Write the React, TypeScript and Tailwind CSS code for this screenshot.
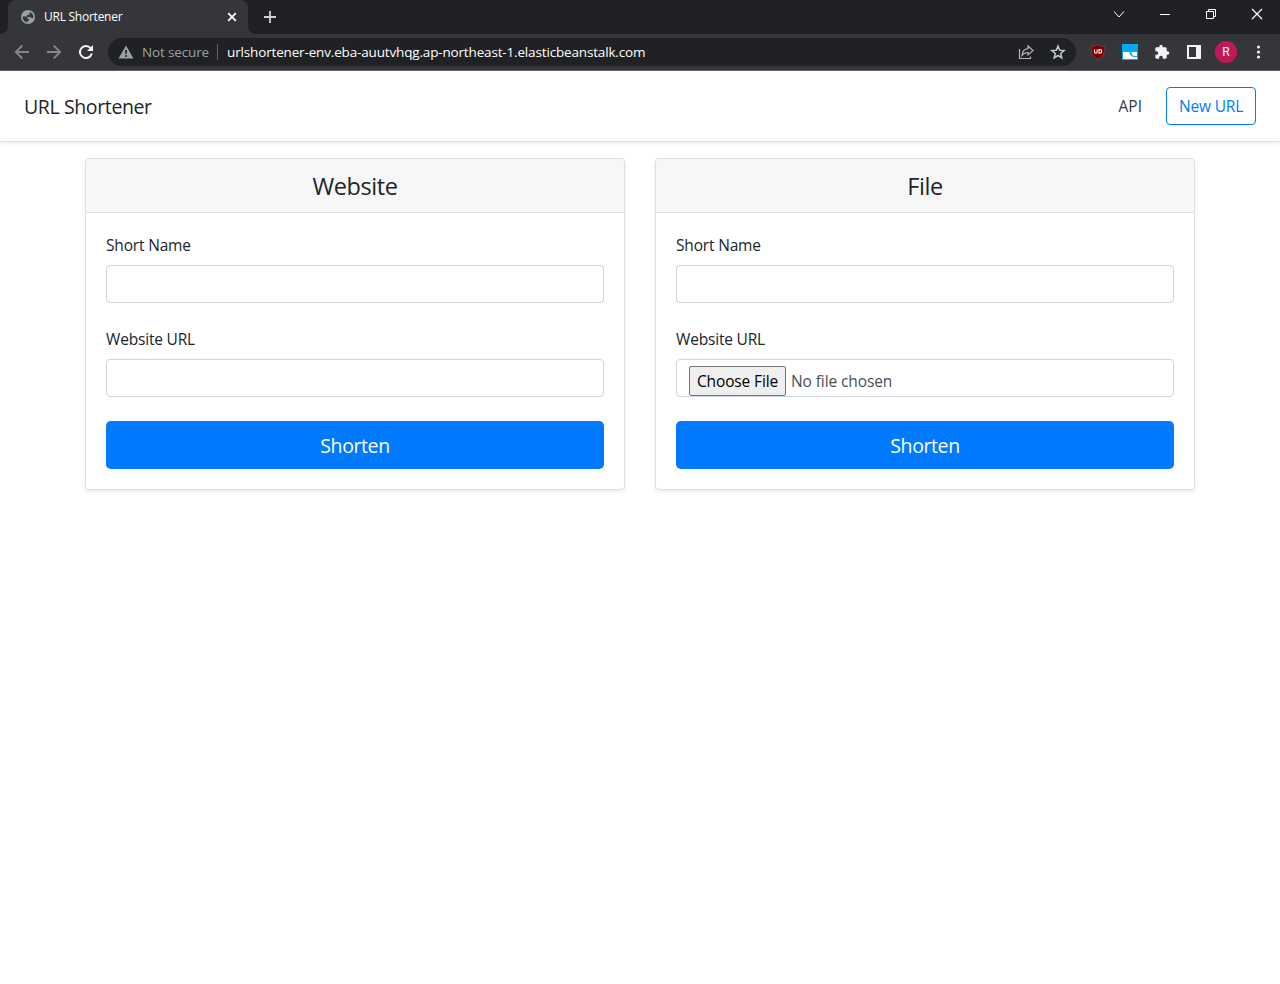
import type { ReactNode } from "react";

function TabStrip() {
  return (
    <div className="flex h-[34px] bg-[#202124] text-white">
      <div className="flex w-2 items-end bg-[#35363a]">
        <div className="h-full w-full rounded-br-[8px] bg-[#202124]" />
      </div>
      <div className="bg-[#202124]">
        <div className="flex h-[34px] w-60 items-center rounded-t-[8px] bg-[#35363a] pr-[10px] pl-[13px]">
          <svg className="size-[14px] shrink-0" viewBox="0 0 14 14">
            <circle cx="7" cy="7" r="7" fill="#9aa0a6" />
            <path d="M1.6 6.6h3.2c1 0 1.8.7 1.8 1.5v.8h1.5v1.5H6.7v1.9C4 12.5 1.5 10 1.6 6.6zM8.6 1.9c2.2.7 3.7 2.6 3.8 5-.3 1-.8 1.4-1.3 1.4-.6 0-.8-.9-1.4-1.1l-2.5-.1c-.8 0-1.4-.5-1.4-1.2 0-.8.6-1.2 1.4-1.2h.6c.8 0 .8-.7.8-1.3z" fill="#35363a" />
          </svg>
          <span className="ml-[9px] text-[12px] tracking-[-0.25px] whitespace-nowrap">URL Shortener</span>
          <svg className="ml-auto size-3" viewBox="0 0 12 12" stroke="#fff" strokeWidth="1.7">
            <path d="M2.2 2.2l7.6 7.6M9.8 2.2l-7.6 7.6" />
          </svg>
        </div>
      </div>
      <div className="w-2 bg-[#35363a]">
        <div className="h-full w-full rounded-bl-[8px] bg-[#202124]" />
      </div>
      <svg className="mt-[11px] ml-2 size-3" viewBox="0 0 12 12" stroke="#cfd1d4" strokeWidth="1.8">
        <path d="M0 6h12M6 0v12" />
      </svg>
      <div className="ml-auto flex pt-2">
        <svg className="h-3 w-[46px]" viewBox="0 0 46 12" fill="none" stroke="#fff">
          <path d="M18 3.5l5 5.5 5-5.5" />
        </svg>
        <svg className="h-3 w-[46px]" viewBox="0 0 46 12" stroke="#fff">
          <path d="M18 6.5h10" />
        </svg>
        <svg className="h-3 w-[46px]" viewBox="0 0 46 12" fill="none" stroke="#fff">
          <path d="M18.5 3.5h7v7h-7zM20.5 3.5v-2h7v7h-2" />
        </svg>
        <svg className="h-3 w-[46px]" viewBox="0 0 46 12" stroke="#fff" strokeWidth="1.2">
          <path d="M18 1l10 10M28 1L18 11" />
        </svg>
      </div>
    </div>
  );
}

function Toolbar() {
  return (
    <div className="flex h-[37px] items-center border-b border-[#5f6068] bg-[#35363a]">
      <svg className="ml-[14px] size-4" viewBox="0 0 16 16" fill="none" stroke="#85868a" strokeWidth="1.8">
        <path d="M15 8H2M8.3 1.5L1.8 8l6.5 6.5" />
      </svg>
      <svg className="ml-4 size-4" viewBox="0 0 16 16" fill="none" stroke="#85868a" strokeWidth="1.8">
        <path d="M1 8h13M7.7 1.5L14.2 8l-6.5 6.5" />
      </svg>
      <svg className="ml-4 size-4" viewBox="0 0 16 16" fill="none" stroke="#f1f3f4" strokeWidth="2">
        <path d="M13.8 9.5A6 6 0 1 1 12.6 4.2" />
        <path d="M15 1v6H9z" fill="#f1f3f4" stroke="none" />
      </svg>
      <div className="ml-[14px] flex h-7 w-[968px] items-center rounded-full bg-[#202124] px-[10px]">
        <svg className="h-[14px] w-4" viewBox="0 0 16 14">
          <path d="M8 .5L15.500 13.500H.5z" fill="#9aa0a6" />
          <path d="M8 5v3.800M8 10v2" stroke="#202124" strokeWidth="1.7" />
        </svg>
        <span className="ml-2 pt-px text-[13.5px] tracking-[-0.14px] whitespace-nowrap text-[#9aa0a6]">Not secure</span>
        <div className="ml-2 h-4 w-px bg-[#5f6368]" />
        <span className="ml-[9px] pt-px text-[13.5px] tracking-[-0.16px] whitespace-nowrap text-white">
          urlshortener-env.eba-auutvhqg.ap-northeast-1.elasticbeanstalk.com
        </span>
        <svg className="ml-auto size-4" viewBox="0 0 16 16" fill="none" stroke="#b5b7ba" strokeWidth="1.2">
          <path d="M1.5 5v9.500h11v-2" />
          <path d="M10 2l5 4.500-5 4.500V8.500C7.200 8.500 5.500 9.400 4 11.500 4.300 7.500 6.500 5 10 4.700z" />
        </svg>
        <svg className="ml-4 size-4" viewBox="0 0 16 16" fill="none" stroke="#c4c7c9" strokeWidth="1.5">
          <path d="M8 2l1.700 4.200 4.400.3-3.400 2.900 1.100 4.400L8 11.500l-3.800 2.300 1.100-4.400L1.900 6.500l4.400-.3z" />
        </svg>
      </div>
      <svg className="ml-[14px] size-4" viewBox="0 0 16 16">
        <path d="M8 .5c2 1.200 4 1.800 6.800 1.800 0 6.700-.5 10.200-6.800 13.200C1.700 12.500 1.200 9 1.200 2.300 4 2.300 6 1.700 8 .5z" fill="#800000" stroke="#5d4545" />
        <path d="M4.500 5.500v2.300c0 1 .5 1.400 1.300 1.400s1.300-.4 1.300-1.400V5.500M9 5.500v3.700h.7c1.300 0 2-.6 2-1.800s-.7-1.900-2-1.900z" fill="none" stroke="#fff" strokeWidth="1.1" />
      </svg>
      <svg className="ml-4 size-4" viewBox="0 0 16 16">
        <path d="M0 0h16v16H0z" fill="#03a9f4" />
        <path d="M1 8h6.500c.5 3.500 2 5 6 5H15v2H1zM9.500 8H15v4h-1.500C10.500 12 10 11 9.500 8z" fill="#fff" />
      </svg>
      <svg className="ml-4 size-4" viewBox="0 0 24 24" fill="#f1f3f4">
        <path d="M20.500 11H19V7c0-1.100-.9-2-2-2h-4V3.500a2.500 2.500 0 0 0-5 0V5H4c-1.100 0-2 .9-2 2v3.800h1.500c1.500 0 2.700 1.200 2.700 2.700S5 16.200 3.500 16.200H2V20c0 1.100.9 2 2 2h3.800v-1.500c0-1.500 1.200-2.700 2.700-2.700s2.700 1.200 2.700 2.700V22H17c1.100 0 2-.9 2-2v-4h1.500a2.500 2.500 0 0 0 0-5z" />
      </svg>
      <svg className="ml-4 size-4" viewBox="0 0 16 16">
        <path d="M1 1h14v14H1zM3 3v10h7V3z" fill="#f1f3f4" fillRule="evenodd" />
      </svg>
      <div className="ml-[13px] flex size-[22px] items-center justify-center rounded-full bg-[#c2185b] font-[Roboto] text-[12px] text-white">R</div>
      <svg className="ml-[13px] size-4" viewBox="0 0 16 16" fill="#f1f3f4">
        <circle cx="8.5" cy="3" r="1.6" />
        <circle cx="8.5" cy="8" r="1.6" />
        <circle cx="8.5" cy="13" r="1.6" />
      </svg>
    </div>
  );
}

function Field({ label, children }: { label: string; children?: ReactNode }) {
  return (
    <div className="mb-6">
      <label className="mb-2 block text-[15.5px] leading-6 tracking-[-0.18px]">{label}</label>
      <div className="flex h-[38px] rounded border border-[#ced4da] bg-white pl-3">{children}</div>
    </div>
  );
}

function Card({ title, children }: { title: string; children: ReactNode }) {
  return (
    <section className="h-[332px] w-[540px] rounded border border-[#dfdfdf] bg-white shadow-[0_2px_4px_rgba(0,0,0,0.075)]">
      <h4 className="h-[54px] rounded-t-[3px] border-b border-[#dfdfdf] bg-[#f7f7f7] pt-[13px] text-center text-[23.5px] leading-[29px] tracking-[-0.4px]">{title}</h4>
      <div className="p-5">
        {children}
        <button className="block h-12 w-full rounded-[4.8px] bg-[#007bff] pt-px text-[19.5px] tracking-[-0.4px] text-white">Shorten</button>
      </div>
    </section>
  );
}

export default function App() {
  return (
    <div className="h-[984px] overflow-hidden bg-white font-['Open_Sans','Noto_Sans',sans-serif] text-[#212529]">
      <TabStrip />
      <Toolbar />
      <header className="flex h-[71px] items-center border-b border-[#dee2e6] px-6 shadow-[0_2px_4px_rgba(0,0,0,0.075)]">
        <h5 className="pt-0.5 text-[19.5px] tracking-[-0.38px]">URL Shortener</h5>
        <a className="ml-auto pt-0.5 text-[15.5px] text-[#343a40]">API</a>
        <a className="ml-6 flex h-[38px] w-[90px] items-center justify-center rounded border border-[#007bff] pt-0.5 text-[15.5px] tracking-[-0.18px] whitespace-nowrap text-[#007bff]">New URL</a>
      </header>
      <main className="flex justify-center gap-[30px] pt-4">
        <Card title="Website">
          <Field label="Short Name" />
          <Field label="Website URL" />
        </Card>
        <Card title="File">
          <Field label="Short Name" />
          <Field label="Website URL">
            <span className="mt-1.5 h-[30px] w-[97px] rounded-[2px] border border-[#767676] bg-[#efefef] text-center text-[15.5px] leading-[28px] tracking-[-0.14px] text-black">Choose File</span>
            <span className="mt-1.5 ml-[5px] text-[15.5px] leading-[30px] tracking-[-0.1px] text-[#495057]">No file chosen</span>
          </Field>
        </Card>
      </main>
    </div>
  );
}
